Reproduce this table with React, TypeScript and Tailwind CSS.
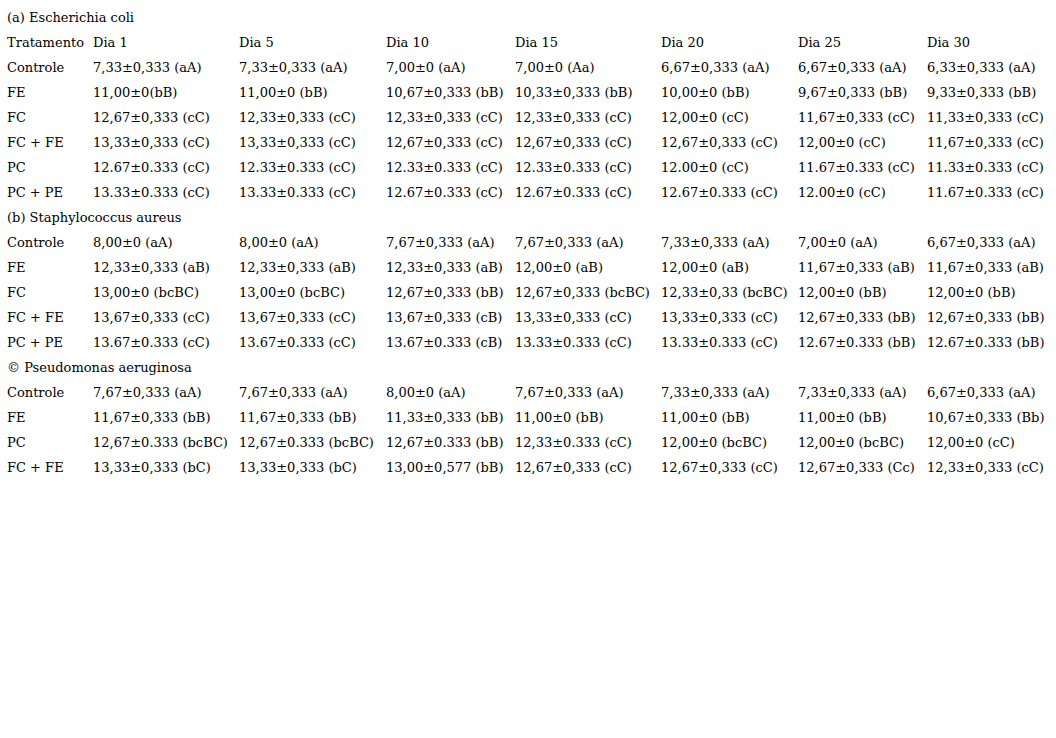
type Row = [string, ...string[]];

interface Section {
  title: string;
  header?: boolean;
  rows: Row[];
}

const sections: Section[] = [
  {
    title: "(a) Escherichia coli",
    header: true,
    rows: [
      ["Controle", "7,33±0,333 (aA)", "7,33±0,333 (aA)", "7,00±0 (aA)", "7,00±0 (Aa)", "6,67±0,333 (aA)", "6,67±0,333 (aA)", "6,33±0,333 (aA)"],
      ["FE", "11,00±0(bB)", "11,00±0 (bB)", "10,67±0,333 (bB)", "10,33±0,333 (bB)", "10,00±0 (bB)", "9,67±0,333 (bB)", "9,33±0,333 (bB)"],
      ["FC", "12,67±0,333 (cC)", "12,33±0,333 (cC)", "12,33±0,333 (cC)", "12,33±0,333 (cC)", "12,00±0 (cC)", "11,67±0,333 (cC)", "11,33±0,333 (cC)"],
      ["FC + FE", "13,33±0,333 (cC)", "13,33±0,333 (cC)", "12,67±0,333 (cC)", "12,67±0,333 (cC)", "12,67±0,333 (cC)", "12,00±0 (cC)", "11,67±0,333 (cC)"],
      ["PC", "12.67±0.333 (cC)", "12.33±0.333 (cC)", "12.33±0.333 (cC)", "12.33±0.333 (cC)", "12.00±0 (cC)", "11.67±0.333 (cC)", "11.33±0.333 (cC)"],
      ["PC + PE", "13.33±0.333 (cC)", "13.33±0.333 (cC)", "12.67±0.333 (cC)", "12.67±0.333 (cC)", "12.67±0.333 (cC)", "12.00±0 (cC)", "11.67±0.333 (cC)"],
    ],
  },
  {
    title: "(b) Staphylococcus aureus",
    rows: [
      ["Controle", "8,00±0 (aA)", "8,00±0 (aA)", "7,67±0,333 (aA)", "7,67±0,333 (aA)", "7,33±0,333 (aA)", "7,00±0 (aA)", "6,67±0,333 (aA)"],
      ["FE", "12,33±0,333 (aB)", "12,33±0,333 (aB)", "12,33±0,333 (aB)", "12,00±0 (aB)", "12,00±0 (aB)", "11,67±0,333 (aB)", "11,67±0,333 (aB)"],
      ["FC", "13,00±0 (bcBC)", "13,00±0 (bcBC)", "12,67±0,333 (bB)", "12,67±0,333 (bcBC)", "12,33±0,33 (bcBC)", "12,00±0 (bB)", "12,00±0 (bB)"],
      ["FC + FE", "13,67±0,333 (cC)", "13,67±0,333 (cC)", "13,67±0,333 (cB)", "13,33±0,333 (cC)", "13,33±0,333 (cC)", "12,67±0,333 (bB)", "12,67±0,333 (bB)"],
      ["PC + PE", "13.67±0.333 (cC)", "13.67±0.333 (cC)", "13.67±0.333 (cB)", "13.33±0.333 (cC)", "13.33±0.333 (cC)", "12.67±0.333 (bB)", "12.67±0.333 (bB)"],
    ],
  },
  {
    title: "© Pseudomonas aeruginosa",
    rows: [
      ["Controle", "7,67±0,333 (aA)", "7,67±0,333 (aA)", "8,00±0 (aA)", "7,67±0,333 (aA)", "7,33±0,333 (aA)", "7,33±0,333 (aA)", "6,67±0,333 (aA)"],
      ["FE", "11,67±0,333 (bB)", "11,67±0,333 (bB)", "11,33±0,333 (bB)", "11,00±0 (bB)", "11,00±0 (bB)", "11,00±0 (bB)", "10,67±0,333 (Bb)"],
      ["PC", "12,67±0.333 (bcBC)", "12,67±0.333 (bcBC)", "12,67±0.333 (bB)", "12,33±0.333 (cC)", "12,00±0 (bcBC)", "12,00±0 (bcBC)", "12,00±0 (cC)"],
      ["FC + FE", "13,33±0,333 (bC)", "13,33±0,333 (bC)", "13,00±0,577 (bB)", "12,67±0,333 (cC)", "12,67±0,333 (cC)", "12,67±0,333 (Cc)", "12,33±0,333 (cC)"],
    ],
  },
];

const headerRow: Row = ["Tratamento", "Dia 1", "Dia 5", "Dia 10", "Dia 15", "Dia 20", "Dia 25", "Dia 30"];

function TableRow({ cells }: { cells: Row }) {
  return (
    <>
      {cells.map((c, i) => (
        <div key={i} className="h-[25px] leading-[25px] whitespace-nowrap">
          {c}
        </div>
      ))}
    </>
  );
}

export default function App() {
  return (
    <div className="w-[1056px] h-[738px] bg-white text-black pl-[7px] pt-[5px] font-['DejaVu_Serif',serif] text-[13px]">
      <div className="grid grid-cols-[86px_146px_147px_129px_146px_137px_129px_1fr]">
        {sections.map((s) => (
          <div key={s.title} className="contents">
            <div className="col-span-8 h-[25px] leading-[25px] whitespace-nowrap">{s.title}</div>
            {s.header && <TableRow cells={headerRow} />}
            {s.rows.map((r, i) => (
              <TableRow key={i} cells={r} />
            ))}
          </div>
        ))}
      </div>
    </div>
  );
}
